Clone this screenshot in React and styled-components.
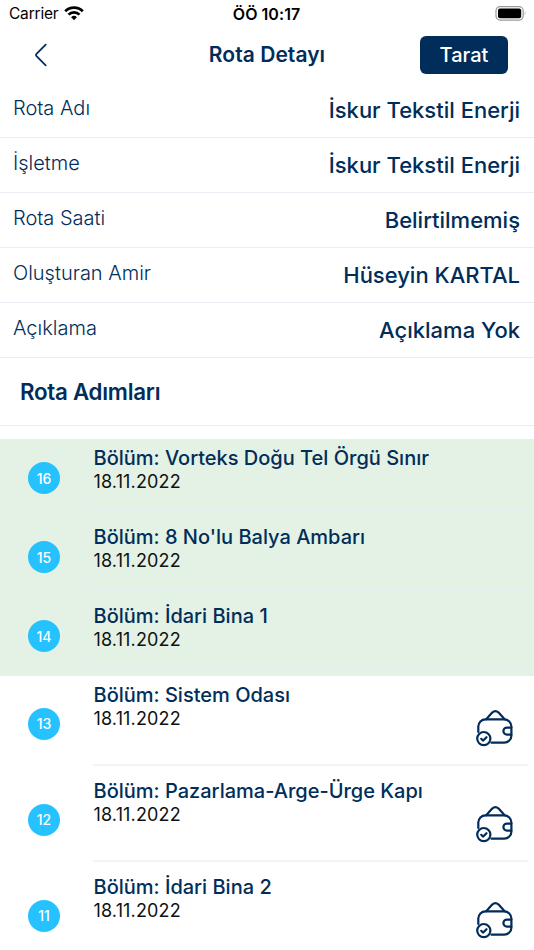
import styled, { createGlobalStyle } from 'styled-components';

const GlobalStyle = createGlobalStyle`
    * {
        box-sizing: border-box;
    }
    body {
        margin: 0;
        background: #fff;
        font-family: Inter, "Liberation Sans", sans-serif;
        overflow: hidden;
    }
`
const Screen = styled.div`
    width: 534px;
    height: 950px;
    display: flex;
    flex-direction: column;
    overflow: hidden;
    color: #002d59;
    white-space: nowrap;
`

const StatusBar = styled.div`
    height: 27px;
    flex-shrink: 0;
    display: grid;
    grid-template-columns: 1fr auto 1fr;
    align-items: center;
    padding: 0 7px 0 9px;
    color: #000;
`
const Carrier = styled.div`
    display: flex;
    align-items: center;
    gap: 6px;
    font-size: 15.5px;
    letter-spacing: -0.2px;
`
const Clock = styled.div`
    padding-right: 3px;
    font-size: 16px;
    font-weight: 600;
    letter-spacing: 0.05px;
`
const Battery = styled.svg`
    justify-self: end;
`

const Header = styled.div`
    height: 56px;
    flex-shrink: 0;
    display: grid;
    grid-template-columns: 1fr auto 1fr;
    align-items: center;
    padding: 0 26px 1px 34px;
`
const BackButton = styled.button`
    display: flex;
    width: 14px;
    padding: 0;
    border: none;
    background: none;
    cursor: pointer;
`
const PageTitle = styled.div`
    padding-right: 8px;
    font-size: 21px;
    font-weight: 600;
    letter-spacing: 0.05px;
`
const ScanButton = styled.button`
    justify-self: end;
    width: 88px;
    height: 38px;
    padding: 0;
    border: none;
    border-radius: 6px;
    background: #002d59;
    color: #fff;
    font-family: inherit;
    font-size: 20px;
    font-weight: 500;
    cursor: pointer;
`

const InfoRow = styled.div`
    height: 55px;
    flex-shrink: 0;
    display: flex;
    justify-content: space-between;
    align-items: center;
    padding: 0 14px 0 13px;
    border-bottom: 1px solid #e9eef5;
`
const Label = styled.div`
    padding-bottom: 4px;
    font-size: 20px;
    font-weight: 300;
`
const Value = styled.div`
    font-size: 22px;
    font-weight: 500;
`

const SectionTitle = styled.div`
    height: 68px;
    flex-shrink: 0;
    display: flex;
    align-items: center;
    padding: 0 20px;
    margin-bottom: 13px;
    border-bottom: 1px solid #e9eef5;
    font-size: 22.3px;
    font-weight: 600;
    letter-spacing: -0.25px;
`

const Step = styled.div`
    height: ${({ $done }) => ($done ? 79 : 96)}px;
    flex-shrink: 0;
    display: flex;
    align-items: center;
    padding: 0 6px 0 28px;
    background: ${({ $done }) => ($done ? '#e4f2e5' : '#fff')};
`
const StepNumber = styled.div`
    width: 32px;
    height: 32px;
    margin: 0 33px 0.4px 0;
    flex-shrink: 0;
    display: flex;
    align-items: center;
    justify-content: center;
    border-radius: 50%;
    background: #25c2ff;
    color: #fff;
    font-size: 14px;
    font-weight: 500;
`
const StepBody = styled.div`
    flex: 1;
    align-self: stretch;
    display: flex;
    justify-content: space-between;
    margin-bottom: 6px;
    border-bottom: 2px solid ${({ $done }) => ($done ? '#e8edf5' : '#f0f4f9')};
`
const StepTitle = styled.div`
    margin: 6px 0 0 0.5px;
    line-height: 26px;
    font-size: 20px;
    font-weight: 500;
`
const StepDate = styled.div`
    margin-left: 0.5px;
    line-height: 22px;
    color: #111;
    font-size: 18px;
    letter-spacing: 0.15px;
`
const StepIcon = styled.svg`
    margin: 32px 13px 0 0;
`

const infos = [
    { label: 'Rota Adı', value: 'İskur Tekstil Enerji' },
    { label: 'İşletme', value: 'İskur Tekstil Enerji' },
    { label: 'Rota Saati', value: 'Belirtilmemiş' },
    { label: 'Oluşturan Amir', value: 'Hüseyin KARTAL' },
    { label: 'Açıklama', value: 'Açıklama Yok' },
]

const steps = [
    { no: 16, title: 'Vorteks Doğu Tel Örgü Sınır', done: true },
    { no: 15, title: "8 No'lu Balya Ambarı", done: true },
    { no: 14, title: 'İdari Bina 1', done: true },
    { no: 13, title: 'Sistem Odası' },
    { no: 12, title: 'Pazarlama-Arge-Ürge Kapı' },
    { no: 11, title: 'İdari Bina 2' },
]

const WalletIcon = () => (
    <StepIcon width="40" height="40" viewBox="0 0 40 40" fill="none" stroke="#002d59" strokeWidth="2.2" strokeLinecap="round" strokeLinejoin="round">
        <path d="M3.3 24V18.6a7.2 7.2 0 0 1 7.2-7.2h18.7a7.2 7.2 0 0 1 7.2 7.2v8.9a7.2 7.2 0 0 1-7.2 7.2H16.4" />
        <path d="M11.2 11.2l6-6.6q3.2-2.8 6.4 0l6 6.6" />
        <path d="M36.3 19.6h-4.4a3.5 3.5 0 0 0 0 7h4.4" />
        <circle cx="8.8" cy="30.6" r="6.6" />
        <path d="M6.2 30.8l2 1.8 3.3-3.4" />
    </StepIcon>
)

const App = () => {
    return (
        <>
            <GlobalStyle />
            <Screen>
                <StatusBar>
                    <Carrier>
                        Carrier
                        <svg width="20" height="15" viewBox="0 0 20 15" fill="none" stroke="#000" strokeWidth="2.7">
                            <path d="M1.2 5.2a12.4 12.4 0 0 1 17.6 0" />
                            <path d="M4.5 8.6a7.8 7.8 0 0 1 11 0" />
                            <path d="M10 14.2l-2.9-3a4.2 4.2 0 0 1 5.8 0z" fill="#000" stroke="none" />
                        </svg>
                    </Carrier>
                    <Clock>ÖÖ 10:17</Clock>
                    <Battery width="32" height="15" viewBox="0 0 32 15">
                        <rect x="1" y="0.7" width="27.2" height="13.4" rx="4" fill="none" stroke="#999" strokeWidth="1.2" />
                        <rect x="3" y="2.6" width="23.2" height="9.6" rx="2" fill="#000" />
                        <path d="M29.8 5.2q1.8 2.2 0 4.4z" fill="#999" />
                    </Battery>
                </StatusBar>
                <Header>
                    <BackButton aria-label="Geri">
                        <svg width="14" height="24" viewBox="0 0 14 24" fill="none" stroke="#002d59" strokeWidth="1.8" strokeLinecap="round">
                            <path d="M11.7 1.7L2.5 10.8q-1.1 1.2 0 2.4l9.2 9.1" />
                        </svg>
                    </BackButton>
                    <PageTitle>Rota Detayı</PageTitle>
                    <ScanButton>Tarat</ScanButton>
                </Header>
                {infos.map((info) => (
                    <InfoRow key={info.label}>
                        <Label>{info.label}</Label>
                        <Value>{info.value}</Value>
                    </InfoRow>
                ))}
                <SectionTitle>Rota Adımları</SectionTitle>
                {steps.map((step) => (
                    <Step key={step.no} $done={step.done}>
                        <StepNumber>{step.no}</StepNumber>
                        <StepBody $done={step.done}>
                            <div>
                                <StepTitle>Bölüm: {step.title}</StepTitle>
                                <StepDate>18.11.2022</StepDate>
                            </div>
                            {!step.done && <WalletIcon />}
                        </StepBody>
                    </Step>
                ))}
            </Screen>
        </>
    )
}

export default App
